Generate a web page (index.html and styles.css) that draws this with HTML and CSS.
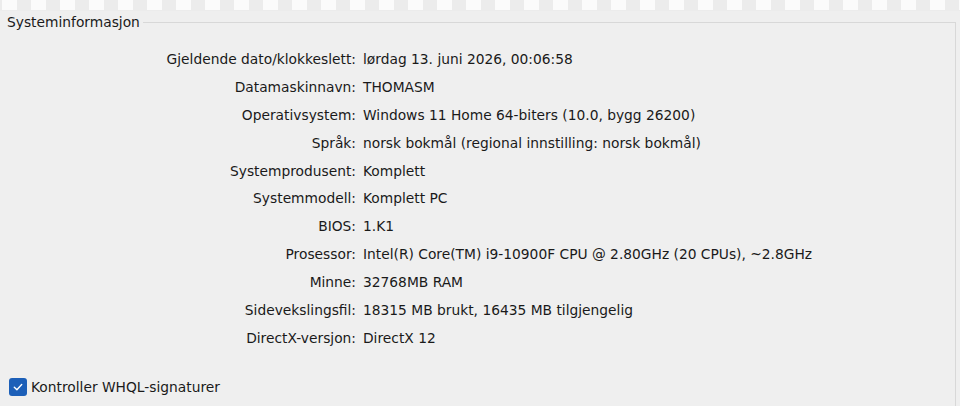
FILE: index.html
```html
<!DOCTYPE html>
<html lang="no">
<head>
<meta charset="utf-8">
<link rel="stylesheet" href="styles.css">
</head>
<body>
<div class="strip">
  <span></span><span></span><span></span><span></span><span></span><span></span><span></span><span></span><span></span><span></span><span></span><span></span><span></span><span></span><span></span><span></span><span></span><span></span><span></span><span></span><span></span><span></span><span></span><span></span><span></span><span></span><span></span><span></span><span></span><span></span><span></span><span></span><span></span><span></span>
</div>
<div class="group">
  <div class="group-head">
    <span class="group-title">Systeminformasjon</span>
    <span class="group-line"></span>
  </div>
  <div class="group-body">
    <div class="info">
      <div class="lbl">Gjeldende dato/klokkeslett:</div><div class="val">lørdag 13. juni 2026, 00:06:58</div>
      <div class="lbl">Datamaskinnavn:</div><div class="val">THOMASM</div>
      <div class="lbl">Operativsystem:</div><div class="val">Windows 11 Home 64-biters (10.0, bygg 26200)</div>
      <div class="lbl">Språk:</div><div class="val">norsk bokmål (regional innstilling: norsk bokmål)</div>
      <div class="lbl">Systemprodusent:</div><div class="val">Komplett</div>
      <div class="lbl">Systemmodell:</div><div class="val">Komplett PC</div>
      <div class="lbl">BIOS:</div><div class="val">1.K1</div>
      <div class="lbl">Prosessor:</div><div class="val">Intel(R) Core(TM) i9-10900F CPU @ 2.80GHz (20 CPUs), ~2.8GHz</div>
      <div class="lbl">Minne:</div><div class="val">32768MB RAM</div>
      <div class="lbl">Sidevekslingsfil:</div><div class="val">18315 MB brukt, 16435 MB tilgjengelig</div>
      <div class="lbl">DirectX-versjon:</div><div class="val">DirectX 12</div>
    </div>
    <label class="check">
      <span class="box"><svg width="12" height="12" viewBox="0 0 12 12"><path d="M2.3 6.2 L4.9 8.7 L9.7 3.5" fill="none" stroke="#fff" stroke-width="1.4" stroke-linecap="round" stroke-linejoin="round"/></svg></span>
      <span>Kontroller WHQL-signaturer</span>
    </label>
  </div>
</div>
</body>
</html>
```

FILE: styles.css
```css
html, body {
  margin: 0;
  padding: 0;
  background: #efefef;
  width: 960px;
  height: 406px;
  overflow: hidden;
  font-family: "DejaVu Sans", Verdana, sans-serif;
  font-size: 13.8px;
  color: #1a1a1a;
}
.strip {
  height: 11px;
  display: flex;
  gap: 14px;
  padding-left: 2px;
  overflow: hidden;
  background: #ececec;
}
.strip span {
  flex: 0 0 15px;
  height: 10px;
  background: #fbfbfb;
}
.group {
  margin-right: 4px;
}
.group-head {
  display: flex;
  align-items: center;
  height: 22px;
}
.group-title {
  padding-left: 7px;
  padding-right: 3px;
}
.group-line {
  flex: 1;
  border-top: 1px solid #d8d8d8;
  border-right: 1px solid #d8d8d8;
  height: 11px;
  align-self: flex-end;
  box-sizing: border-box;
}
.group-body {
  border-right: 1px solid #d8d8d8;
  height: 380px;
  padding-top: 12px;
  box-sizing: border-box;
}
.info {
  display: grid;
  grid-template-columns: 356px auto;
  grid-auto-rows: 27.9px;
  align-items: center;
  column-gap: 7px;
}
.lbl {
  text-align: right;
}
.check {
  display: flex;
  align-items: center;
  gap: 4px;
  margin-top: 26px;
  padding-left: 9px;
}
.box {
  width: 18px;
  height: 18px;
  border-radius: 3px;
  background: #1c5fb8;
  display: flex;
  align-items: center;
  justify-content: center;
}
```
